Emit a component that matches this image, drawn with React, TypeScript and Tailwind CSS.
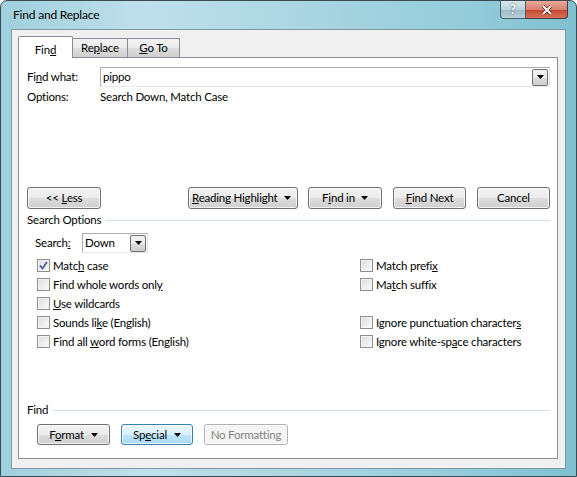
import React from 'react';

const font = { fontFamily: 'Lato, "Liberation Sans", sans-serif' };

function Arrow() {
  return (
    <svg width="7" height="4" viewBox="0 0 7 4" className="shrink-0">
      <path d="M0 0h7L3.5 4z" fill="#000" />
    </svg>
  );
}

function Btn({
  children,
  className = '',
  kind = 'normal',
}: {
  children: React.ReactNode;
  className?: string;
  kind?: 'normal' | 'focus' | 'disabled';
}) {
  const look =
    kind === 'focus'
      ? 'border-[#3c7fb1] bg-[linear-gradient(#eaf6fd_0%,#d9f0fc_50%,#bee6fd_51%,#a7d9f5_100%)] text-black'
      : kind === 'disabled'
      ? 'border-[#adb2b5] bg-[#f4f4f4] text-[#838383]'
      : 'border-[#707070] bg-[linear-gradient(#f2f2f2_0%,#ebebeb_50%,#dddddd_51%,#cfcfcf_100%)] text-black';
  return (
    <div
      className={`flex items-center justify-center whitespace-nowrap rounded-[3px] border shadow-[inset_0_0_0_1px_rgba(255,255,255,0.75)] ${look} ${className}`}
    >
      {children}
    </div>
  );
}

function DropBtn() {
  return (
    <div className="w-[16px] h-[17px] mr-px border border-[#707070] rounded-[2px] bg-[linear-gradient(#f2f2f2_0%,#ebebeb_50%,#dddddd_51%,#cfcfcf_100%)] flex items-center justify-center">
      <Arrow />
    </div>
  );
}

function Check({ checked, children }: { checked?: boolean; children: React.ReactNode }) {
  return (
    <div className="h-[19px] flex items-center whitespace-nowrap">
      <div className="w-[13px] h-[13px] border border-[#8e8f8f] bg-[linear-gradient(135deg,#dcdcdc,#fbfbfb)] shadow-[inset_0_0_0_1px_#f4f4f4] flex items-center justify-center">
        {checked && (
          <svg width="9" height="9" viewBox="0 0 9 9">
            <path d="M1 4.5l2.5 3L8 1" fill="none" stroke="#4a5f97" strokeWidth="1.8" />
          </svg>
        )}
      </div>
      <span className="ml-[3px]">{children}</span>
    </div>
  );
}

export default function App() {
  return (
    <div
      style={font}
      className="w-[577px] h-[477px] flex flex-col border border-[#3b4a52] rounded-t-[7px] bg-[linear-gradient(90deg,#9fd0dd_0%,#bfe0ea_25%,#a8d5e1_55%,#95ccda_80%,#7fc1d1_100%)] text-black text-[11.5px] tracking-[-0.2px]"
    >
      {/* title bar */}
      <div className="h-[28px] flex items-start justify-between">
        <div className="pl-[12px] pt-[6px] text-[12px] leading-[16px]">Find and Replace</div>
        <div className="flex mr-[8px]">
          <div className="w-[26px] h-[18px] border border-t-0 border-[#4d5d66] rounded-bl-[4px] bg-[linear-gradient(#d6e6ec_0%,#bcd3dc_50%,#9bb9c6_51%,#b5d1dc_100%)] flex items-center justify-center text-[13px] font-bold text-white [text-shadow:0_0_2px_#3a4a52]">
            ?
          </div>
          <div className="w-[42px] h-[18px] border border-t-0 border-l-0 border-[#4d3a38] rounded-br-[4px] bg-[linear-gradient(#e9a99c_0%,#d9806e_50%,#c2442d_51%,#d9725a_100%)] flex items-center justify-center">
            <svg width="12" height="10" viewBox="0 0 12 10">
              <path d="M2 1l8 8M10 1L2 9" stroke="#5a1d12" strokeWidth="3.4" />
              <path d="M2 1l8 8M10 1L2 9" stroke="#fff" strokeWidth="2" />
            </svg>
          </div>
        </div>
      </div>

      {/* client area */}
      <div className="ml-[10px] w-[555px] h-[440px] border border-[#7f98a3] bg-[#f0f0f0] pl-[6px] pt-[6px]">
        {/* tabs */}
        <div className="flex items-end h-[22px] relative z-10">
          <div className="w-[55px] h-[22px] bg-white border border-b-0 border-[#898c95] rounded-t-[2px] flex items-start justify-center pt-[4px]">
            <span>
              Fin<u>d</u>
            </span>
          </div>
          <div className="w-[55px] h-[19px] mb-px bg-[linear-gradient(#f3f3f3_0%,#ebebeb_50%,#dddddd_51%,#cfcfcf_100%)] border border-l-0 border-b-0 border-[#898c95] flex items-center justify-center">
            <span>
              Re<u>p</u>lace
            </span>
          </div>
          <div className="w-[52px] h-[19px] mb-px bg-[linear-gradient(#f3f3f3_0%,#ebebeb_50%,#dddddd_51%,#cfcfcf_100%)] border border-l-0 border-b-0 border-[#898c95] flex items-center justify-center">
            <span>
              <u>G</u>o To
            </span>
          </div>
        </div>

        {/* panel */}
        <div className="-mt-px w-[540px] h-[402px] bg-white border border-[#898c95] pl-[8px] pr-[7px] leading-[14px]">
          <div className="mt-[9px] h-[20px] flex items-center">
            <div className="w-[73px]">
              Fi<u>n</u>d what:
            </div>
            <div className="w-[450px] h-[20px] border border-[#abadb3] border-b-[#e3e9ef] border-r-[#dbdfe6] flex items-center justify-between pl-[2px]">
              <span>pippo</span>
              <DropBtn />
            </div>
          </div>
          <div className="mt-[3px] h-[14px] flex">
            <div className="w-[73px]">Options:</div>
            <div>Search Down, Match Case</div>
          </div>

          {/* main buttons */}
          <div className="mt-[83px] h-[22px] flex">
            <Btn className="w-[74px] h-[22px]">
              &lt;&lt;
              <span className="ml-[3px]">
                <u>L</u>ess
              </span>
            </Btn>
            <Btn className="ml-[87px] w-[110px] h-[22px] !justify-between pl-[3px] pr-[6px]">
              <span>
                <u>R</u>eading Highlight
              </span>
              <Arrow />
            </Btn>
            <Btn className="ml-[10px] w-[74px] h-[22px] gap-[6px]">
              <span>
                F<u>i</u>nd in
              </span>
              <Arrow />
            </Btn>
            <Btn className="ml-[11px] w-[73px] h-[22px]">
              <span>
                <u>F</u>ind Next
              </span>
            </Btn>
            <Btn className="ml-[11px] w-[73px] h-[22px]">Cancel</Btn>
          </div>

          {/* search options */}
          <div className="mt-[4px] h-[14px] flex items-center">
            <span>Search Options</span>
            <div className="flex-1 h-px bg-[#d5dfe5] ml-[5px]" />
          </div>
          <div className="mt-[6px] h-[20px] flex items-center pl-[8px]">
            <div className="w-[47px]">
              Search<u>:</u>
            </div>
            <div className="w-[66px] h-[20px] border border-[#abadb3] border-b-[#e3e9ef] border-r-[#dbdfe6] flex items-center justify-between pl-[2px]">
              <span>Down</span>
              <DropBtn />
            </div>
          </div>

          <div className="mt-[3px] pl-[10px] grid grid-cols-[323px_1fr]">
            <div className="flex flex-col">
              <Check checked>
                Matc<u>h</u> case
              </Check>
              <Check>
                Find whole words onl<u>y</u>
              </Check>
              <Check>
                <u>U</u>se wildcards
              </Check>
              <Check>
                Sounds li<u>k</u>e (English)
              </Check>
              <Check>
                Find all <u>w</u>ord forms (English)
              </Check>
            </div>
            <div className="flex flex-col">
              <Check>
                Match prefi<u>x</u>
              </Check>
              <Check>
                Ma<u>t</u>ch suffix
              </Check>
              <div className="h-[19px]" />
              <Check>
                Ignore punctuation character<u>s</u>
              </Check>
              <Check>
                Ignore white-sp<u>a</u>ce characters
              </Check>
            </div>
          </div>

          {/* find */}
          <div className="mt-[52px] h-[14px] flex items-center">
            <span>Find</span>
            <div className="flex-1 h-px bg-[#d5dfe5] ml-[5px]" />
          </div>
          <div className="mt-[7px] pl-[10px] flex">
            <Btn className="w-[73px] h-[21px] gap-[7px]">
              <span>
                F<u>o</u>rmat
              </span>
              <Arrow />
            </Btn>
            <Btn kind="focus" className="ml-[11px] w-[72px] h-[21px] gap-[7px]">
              <span>
                Sp<u>e</u>cial
              </span>
              <Arrow />
            </Btn>
            <Btn kind="disabled" className="ml-[11px] w-[84px] h-[21px]">
              No Formatting
            </Btn>
          </div>
        </div>
      </div>
    </div>
  );
}
